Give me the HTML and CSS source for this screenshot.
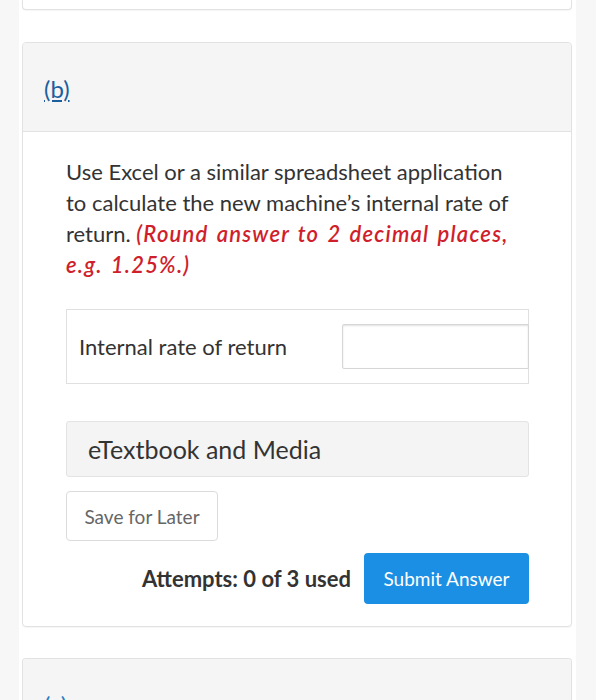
FILE: index.html
```html
<!DOCTYPE html>
<html lang="en">
<head>
<meta charset="utf-8">
<title>Question part (b)</title>
<link rel="stylesheet" href="styles.css">
</head>
<body>
<div class="page">
  <div class="card card-prev"></div>

  <section class="card">
    <header class="card-head"><a class="part-link" href="#">(b)</a></header>
    <div class="card-body">
      <p class="question">Use Excel or a similar spreadsheet application to calculate the new machine’s internal rate of return. <em class="hint">(Round answer to 2 decimal places, e.g. 1.25%.)</em></p>

      <div class="answer-box">
        <label class="answer-label" for="irr">Internal rate of return</label>
        <input class="answer-input" id="irr" type="text">
      </div>

      <div class="media-box">eTextbook and Media</div>

      <button class="btn-save" type="button">Save for Later</button>

      <div class="submit-row">
        <span class="attempts">Attempts: 0 of 3 used</span>
        <button class="btn-submit" type="button">Submit Answer</button>
      </div>
    </div>
  </section>

  <section class="card card-next">
    <header class="card-head"><a class="part-link" href="#">(c)</a></header>
  </section>
</div>
</body>
</html>
```

FILE: styles.css
```css
html, body {
  margin: 0;
  padding: 0;
}
body {
  background: #f7f7f7;
  font-family: Lato, "Open Sans", Arial, sans-serif;
  color: #333;
  overflow: hidden;
  height: 700px;
}
.page {
  background: #fff;
  margin-left: 19px;
  width: 557px;
  height: 700px;
  overflow: hidden;
  padding: 0 4px 0 3px;
  box-sizing: border-box;
}
.card {
  border: 1px solid #e2e2e2;
  border-radius: 4px;
  background: #fff;
  box-shadow: 0 1px 1px rgba(0,0,0,0.04);
}
.card-prev {
  height: 10px;
  border-top: none;
  border-radius: 0 0 4px 4px;
  box-sizing: border-box;
  margin-bottom: 32px;
}
.card-head {
  background: #f5f5f5;
  height: 89px;
  border-bottom: 1px solid #e2e2e2;
  border-radius: 4px 4px 0 0;
  padding: 31px 0 0 21px;
  box-sizing: border-box;
}
.part-link {
  color: #1d5f9c;
  font-size: 24px;
  line-height: 30px;
  text-decoration: underline;
  text-underline-offset: 2px;
}
.card-body {
  padding: 24px 42px 22px 43px;
}
.question {
  margin: 0;
  max-width: 450px;
  font-size: 22px;
  line-height: 31px;
  color: #333;
}
.hint {
  color: #d01f2c;
  font-weight: 600;
  font-style: italic;
  letter-spacing: 1.2px;
  word-spacing: 2px;
}
.answer-box {
  margin-top: 29px;
  height: 75px;
  box-sizing: border-box;
  border: 1px solid #e0e0e0;
  display: flex;
  align-items: center;
  justify-content: space-between;
  padding-left: 12px;
}
.answer-label {
  font-size: 22px;
  color: #333;
}
.answer-input {
  width: 187px;
  height: 45px;
  box-sizing: border-box;
  border: 1px solid #d6d6d6;
  border-radius: 2px 0 0 2px;
  box-shadow: inset 0 1px 2px rgba(0,0,0,0.12);
  margin-right: -1px;
  font-family: inherit;
  font-size: 18px;
  padding: 0 8px;
  background: #fff;
}
.media-box {
  margin-top: 37px;
  height: 56px;
  box-sizing: border-box;
  background: #f4f4f4;
  border: 1px solid #e3e3e3;
  border-radius: 3px;
  padding-left: 21px;
  display: flex;
  align-items: center;
  font-size: 25px;
  color: #333;
}
.btn-save {
  display: block;
  margin-top: 14px;
  width: 152px;
  height: 50px;
  box-sizing: border-box;
  border: 1px solid #dcdcdc;
  border-radius: 4px;
  background: #fff;
  font-family: inherit;
  font-size: 19px;
  color: #666;
  padding: 0;
}
.submit-row {
  margin-top: 12px;
  display: flex;
  justify-content: flex-end;
  align-items: center;
  gap: 13px;
}
.attempts {
  font-size: 22px;
  font-weight: 700;
  color: #333;
}
.btn-submit {
  width: 165px;
  height: 51px;
  box-sizing: border-box;
  border: none;
  border-radius: 4px;
  background: #1a8fe3;
  color: #fff;
  font-family: inherit;
  font-size: 19px;
  padding: 0;
}
.card-next {
  margin-top: 31px;
  border-bottom: none;
  border-radius: 4px 4px 0 0;
}
.card-next .card-head {
  border-bottom: none;
}
.card-next .part-link {
  color: #2b7fc2;
}
```
